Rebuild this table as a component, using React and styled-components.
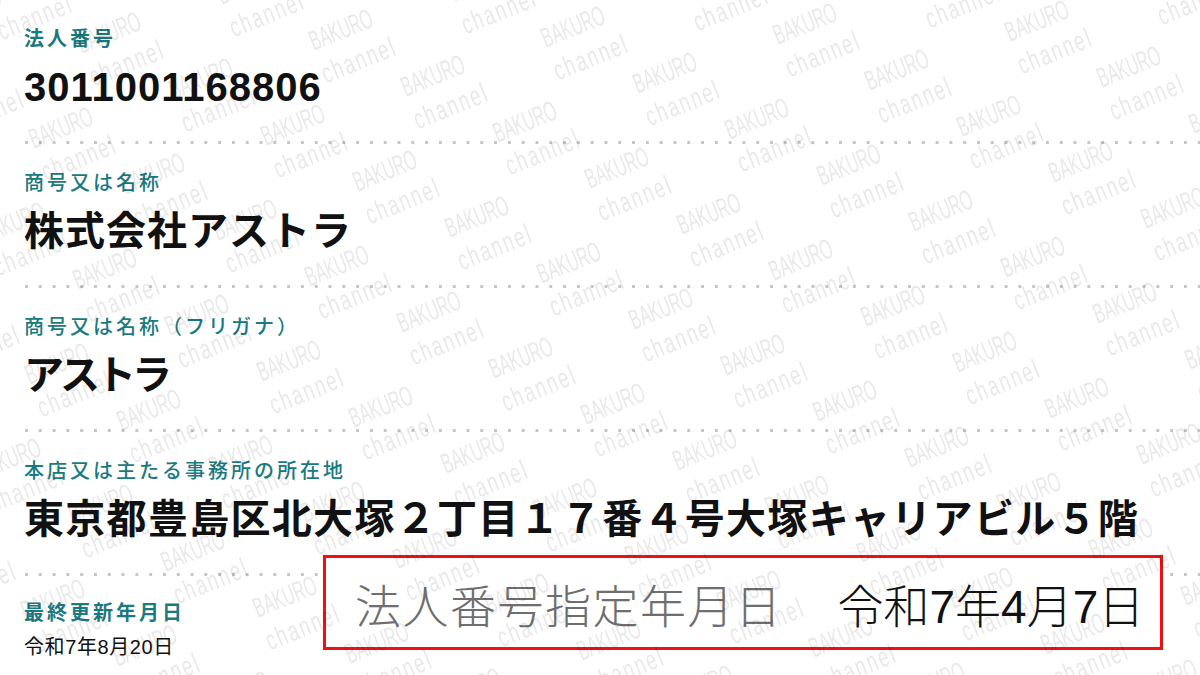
import React from "react";
import styled, { createGlobalStyle } from "styled-components";

const GlobalStyle = createGlobalStyle`
  html, body {
    margin: 0;
    padding: 0;
    background: #fff;
    overflow: hidden;
  }
`;

const colors = {
  teal: "#1a7a80",
  ink: "#111",
  dots: "#c6c6c6",
  mark: "#e9e9e9",
  red: "#f01010",
  gray: "#6e6e6e",
};

const fontStack = `"Liberation Sans", "Noto Sans CJK JP", sans-serif`;

const records = [
  { label: "法人番号", value: "3011001168806", bold: true, spacing: 1 },
  { label: "商号又は名称", value: "株式会社アストラ", spacing: 1 },
  { label: "商号又は名称（フリガナ）", value: "アストラ", spacing: -4 },
  {
    label: "本店又は主たる事務所の所在地",
    value: "東京都豊島区北大塚２丁目１７番４号大塚キャリアビル５階",
    spacing: 1.3,
  },
];

// watermark lattice, measured off the screenshot
const markA = { x: 232, y: -3 };
const markB = { x: 92, y: 46 };
const markOrigin = { x: 337, y: 266 };

const buildMarks = () => {
  const list = [];
  for (let i = -6; i <= 8; i++) {
    for (let j = -8; j <= 12; j++) {
      const x = markOrigin.x + i * markA.x + j * markB.x;
      const y = markOrigin.y + i * markA.y + j * markB.y;
      if (x > -120 && x < 1320 && y > -60 && y < 740) {
        list.push({ x, y, key: `${i}_${j}` });
      }
    }
  }
  return list;
};

const Watermark = () => {
  const marks = buildMarks();
  return (
    <MarkLayer>
      <svg width="1200" height="675" viewBox="0 0 1200 675">
        {marks.map((m) => (
          <g key={m.key} transform={`translate(${m.x} ${m.y}) rotate(-22)`}>
            <MarkText transform="scale(0.56 1)" y="9" textAnchor="middle">
              BAKURO
            </MarkText>
            <MarkText
              transform="scale(0.66 1)"
              y="44"
              x="8"
              textAnchor="middle"
              letterSpacing="3"
            >
              channel
            </MarkText>
          </g>
        ))}
      </svg>
    </MarkLayer>
  );
};

const App = () => {
  return (
    <Page>
      <GlobalStyle />
      <List>
        {records.map((r) => (
          <Section key={r.label} $top={27}>
            <Label $bold={r.bold}>{r.label}</Label>
            <Value $spacing={r.spacing}>{r.value}</Value>
          </Section>
        ))}
        <Section $top={25} $last>
          <Label $bold>最終更新年月日</Label>
          <SmallValue>令和7年8月20日</SmallValue>
        </Section>
      </List>

      <Callout>
        <CalloutTitle>法人番号指定年月日</CalloutTitle>
        <CalloutDate>令和7年4月7日</CalloutDate>
      </Callout>

      <Watermark />
    </Page>
  );
};

export default App;

const Page = styled.div`
  position: relative;
  width: 1200px;
  height: 675px;
  overflow: hidden;
  background: #fff;
  font-family: ${fontStack};
`;

const List = styled.div`
  display: flex;
  flex-direction: column;
  padding-left: 24px;
`;

const Section = styled.section`
  display: flex;
  flex-direction: column;
  gap: 10px;
  padding-top: ${(p) => p.$top}px;
  padding-bottom: ${(p) => (p.$last ? 0 : 31)}px;
  background-image: ${(p) =>
    p.$last
      ? "none"
      : `linear-gradient(to right, ${colors.dots} 0 3px, transparent 3px 100%)`};
  background-size: 13.8px 3px;
  background-repeat: repeat-x;
  background-position: 1px bottom;
`;

const Label = styled.div`
  font-size: 20px;
  line-height: 24px;
  letter-spacing: 3px;
  color: ${colors.teal};
  font-weight: ${(p) => (p.$bold ? 700 : 500)};
  white-space: nowrap;
`;

const Value = styled.div`
  font-size: 40px;
  line-height: 52px;
  font-weight: 700;
  color: ${colors.ink};
  letter-spacing: ${(p) => p.$spacing}px;
  white-space: nowrap;
`;

const SmallValue = styled.div`
  font-size: 20px;
  line-height: 24px;
  letter-spacing: 0.6px;
  color: ${colors.ink};
  white-space: nowrap;
`;

const Callout = styled.div`
  position: absolute;
  left: 323px;
  top: 555px;
  width: 840px;
  height: 95px;
  box-sizing: border-box;
  border: 3px solid ${colors.red};
  background: #fff;
  display: flex;
  align-items: center;
  gap: 55px;
  padding-left: 29px;
  z-index: 1;
`;

const CalloutTitle = styled.span`
  font-size: 46px;
  font-weight: 300;
  letter-spacing: 1.5px;
  color: ${colors.gray};
  white-space: nowrap;
`;

const CalloutDate = styled.span`
  font-size: 46px;
  font-weight: 300;
  color: ${colors.ink};
  white-space: nowrap;
`;

const MarkLayer = styled.div`
  position: absolute;
  inset: 0;
  z-index: 2;
  pointer-events: none;
  mix-blend-mode: multiply;

  svg {
    display: block;
  }
`;

const MarkText = styled.text`
  font-family: "Liberation Sans", sans-serif;
  font-size: 28px;
  fill: ${colors.mark};
`;
